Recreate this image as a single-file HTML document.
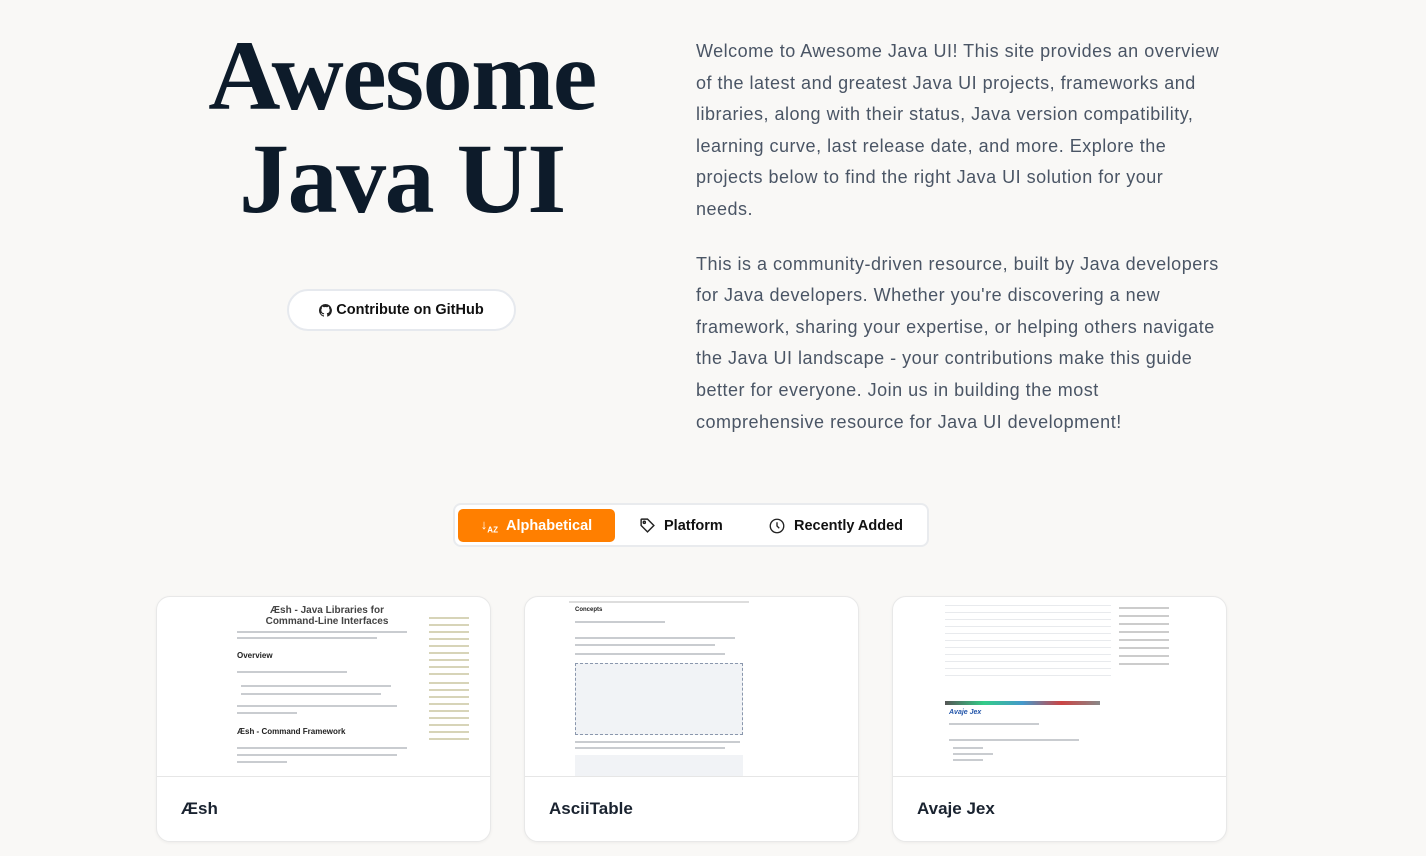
<!DOCTYPE html>
<html><head><meta charset="utf-8"><style>
*{margin:0;padding:0;box-sizing:border-box}
body{width:1426px;height:856px;overflow:hidden;background:#f9f8f6;font-family:"Liberation Sans",sans-serif;position:relative}
h1{position:absolute;left:150px;width:504px;top:24px;text-align:center;font-family:"Liberation Serif",serif;font-weight:700;font-size:100px;line-height:103px;color:#0d1b2a;letter-spacing:-1.5px}
.gh{position:absolute;left:287px;top:289px;width:229px;height:42px;border-radius:21px;background:#fff;border:2px solid #e6e9ee;font-size:14.5px;font-weight:700;color:#111;display:flex;align-items:center;justify-content:center;gap:4px}
.txt{position:absolute;left:696px;top:36px;width:530px;font-size:18px;line-height:31.6px;color:#4a5565;letter-spacing:0.5px}
.txt p{margin-bottom:23px}
.tabs{position:absolute;left:453px;top:503px;width:476px;height:44px;background:#fff;border:2px solid #e9ebee;border-radius:8px}
.tab{position:absolute;top:4px;height:33px;display:flex;align-items:center;gap:8px;font-size:14.5px;font-weight:700;color:#111}
.on{left:3px;width:157px;background:#ff7f00;color:#fff;border-radius:5px;justify-content:center}
.card{position:absolute;top:596px;width:335px;height:246px;background:#fff;border-radius:14px;border:1px solid #e8e8e8;overflow:hidden;box-shadow:0 1px 3px rgba(0,0,0,.05)}
.shot{height:180px;border-bottom:1px solid #e6e6e6;position:relative;overflow:hidden}
.name{position:absolute;left:24px;top:202px;font-size:17px;font-weight:700;color:#1a2330}
.l{position:absolute;height:2px;background:#c9ccd0}
</style></head><body>
<h1>Awesome<br>Java UI</h1>
<div class="gh"><svg width="13" height="13" viewBox="0 0 16 16"><path fill="#222" d="M8 0a8 8 0 0 0-2.5 15.6c.4 0 .5-.2.5-.4v-1.5c-2.2.5-2.7-1-2.7-1-.4-.9-.9-1.2-.9-1.2-.7-.5.1-.5.1-.5.8.1 1.2.8 1.2.8.7 1.3 1.9.9 2.3.7.1-.5.3-.9.5-1.1-1.8-.2-3.6-.9-3.6-4 0-.9.3-1.6.8-2.1-.1-.2-.4-1 .1-2.1 0 0 .7-.2 2.2.8a7.5 7.5 0 0 1 4 0c1.5-1 2.2-.8 2.2-.8.4 1.1.2 1.9.1 2.1.5.6.8 1.3.8 2.1 0 3.1-1.9 3.8-3.6 4 .3.3.6.8.6 1.5v2.2c0 .2.1.5.6.4A8 8 0 0 0 8 0z"/></svg>Contribute on GitHub</div>
<div class="txt"><p>Welcome to Awesome Java UI! This site provides an overview of the latest and greatest Java UI projects, frameworks and libraries, along with their status, Java version compatibility, learning curve, last release date, and more. Explore the projects below to find the right Java UI solution for your<br>needs.</p><p>This is a community-driven resource, built by Java developers for Java developers. Whether you're discovering a new framework, sharing your expertise, or helping others navigate the Java UI landscape - your contributions make this guide better for everyone. Join us in building the most comprehensive resource for Java UI development!</p></div>
<div class="tabs">
<div class="tab on"><span style="font-size:13px">↓<sub style="font-size:8px">AZ</sub></span>Alphabetical</div>
<div class="tab" style="left:184px"><svg width="17" height="17" viewBox="0 0 24 24" fill="none" stroke="#222" stroke-width="2"><path d="M3 12V4a1 1 0 0 1 1-1h8l9 9-9 9z"/><circle cx="7.5" cy="7.5" r="1.5"/></svg>Platform</div>
<div class="tab" style="left:313px"><svg width="18" height="18" viewBox="0 0 24 24" fill="none" stroke="#222" stroke-width="1.8"><circle cx="12" cy="12" r="9"/><path d="M12 7v5l3 3"/></svg>Recently Added</div>
</div>
<div class="card" style="left:156px"><div class="shot">
<div style="position:absolute;left:100px;top:8px;font-size:10px;font-weight:700;color:#444;text-align:center;width:140px">Æsh - Java Libraries for Command-Line Interfaces</div>
<div style="position:absolute;left:80px;top:54px;font-size:8px;font-weight:700;color:#222">Overview</div>
<div style="position:absolute;left:80px;top:130px;font-size:8px;font-weight:700;color:#222">Æsh - Command Framework</div>
<div class="l" style="left:80px;top:34px;width:170px"></div><div class="l" style="left:80px;top:40px;width:140px"></div>
<div class="l" style="left:80px;top:74px;width:110px"></div><div class="l" style="left:84px;top:88px;width:150px"></div><div class="l" style="left:84px;top:96px;width:140px"></div><div class="l" style="left:80px;top:108px;width:160px"></div><div class="l" style="left:80px;top:115px;width:60px"></div>
<div class="l" style="left:80px;top:150px;width:170px"></div><div class="l" style="left:80px;top:157px;width:160px"></div><div class="l" style="left:80px;top:164px;width:50px"></div>
<div class="l" style="left:272px;top:20px;width:40px;height:60px;background:repeating-linear-gradient(#d7d4b8 0 2px,transparent 2px 7px)"></div>
<div class="l" style="left:272px;top:85px;width:40px;height:60px;background:repeating-linear-gradient(#d7d4b8 0 2px,transparent 2px 7px)"></div>
</div><div class="name">Æsh</div></div>
<div class="card" style="left:524px"><div class="shot">
<div class="l" style="left:44px;top:4px;width:180px;height:2px;background:#ddd"></div>
<div style="position:absolute;left:50px;top:10px;font-size:6px;font-weight:700;color:#222">Concepts</div>
<div class="l" style="left:50px;top:24px;width:90px"></div><div class="l" style="left:50px;top:40px;width:160px"></div><div class="l" style="left:50px;top:47px;width:140px"></div><div class="l" style="left:50px;top:56px;width:150px"></div>
<div style="position:absolute;left:50px;top:66px;width:168px;height:72px;background:#f1f3f6;border:1px dashed #8a97ad"></div>
<div class="l" style="left:50px;top:144px;width:165px"></div><div class="l" style="left:50px;top:150px;width:150px"></div>
<div style="position:absolute;left:50px;top:158px;width:168px;height:30px;background:#f1f3f6"></div>
</div><div class="name">AsciiTable</div></div>
<div class="card" style="left:892px"><div class="shot">
<div style="position:absolute;left:52px;top:2px;width:166px;height:80px;background:repeating-linear-gradient(#fff 0 6px,#e8eaed 6px 7px)"></div>
<div class="l" style="left:52px;top:104px;width:155px;height:4px;background:linear-gradient(90deg,#555,#3c8,#49c,#c44,#888)"></div>
<div style="position:absolute;left:56px;top:112px;font-size:7px;color:#2255aa;font-style:italic;font-weight:700">Avaje Jex</div>
<div class="l" style="left:56px;top:126px;width:90px"></div><div class="l" style="left:56px;top:142px;width:130px"></div><div class="l" style="left:60px;top:150px;width:30px"></div><div class="l" style="left:60px;top:156px;width:40px"></div><div class="l" style="left:60px;top:162px;width:30px"></div>
<div class="l" style="left:226px;top:10px;width:50px;height:60px;background:repeating-linear-gradient(#ccc 0 2px,transparent 2px 8px)"></div>
</div><div class="name">Avaje Jex</div></div>
</body></html>
